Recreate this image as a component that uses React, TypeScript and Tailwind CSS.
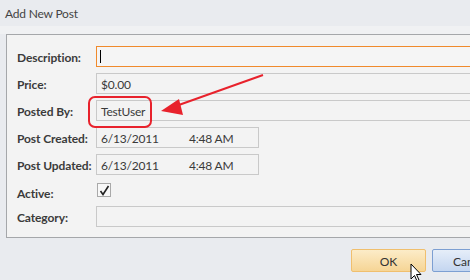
import React from "react";

const font = { fontFamily: 'Lato, "Open Sans", sans-serif' };

function Row({ label, children, h = "h-[21px]" }: { label: string; children: React.ReactNode; h?: string }) {
  return (
    <div className={`flex items-center ${h}`}>
      <div className="w-[79px] shrink-0 whitespace-nowrap text-[12px] tracking-[-0.1px] font-bold text-[#3b3b3b] leading-none pt-[3px]">{label}</div>
      {children}
    </div>
  );
}

const inputText = "text-[12px] tracking-[-0.2px] text-[#3a3a3a] leading-none pt-[3px]";

export default function App() {
  return (
    <div className="relative w-[470px] h-[280px] overflow-hidden bg-[#e9ebef]" style={font}>
      <div className="h-[26px] flex items-center pl-[5px] pt-[2px] text-[12px] tracking-[-0.2px] text-[#444]">Add New Post</div>
      <div className="h-[8px] bg-[#f0f1f3]" />
      <div className="ml-[6px] w-[490px] border border-[#a5a7aa] bg-[#f3f3f3] pt-[11px] pb-[10px] pl-[10px] flex flex-col gap-[6px]">
        <Row label="Description:">
          <div className="flex-1 h-[21px] border border-[#f08a2c] bg-[#f5f5f5] flex items-center pl-[3px]">
            <div className="w-[1px] h-[13px] bg-black" />
          </div>
        </Row>
        <Row label="Price:">
          <div className={`flex-1 h-[21px] border border-[#c9c9c9] flex items-center pl-[4px] ${inputText}`}>$0.00</div>
        </Row>
        <Row label="Posted By:">
          <div className={`flex-1 h-[21px] border border-[#c9c9c9] flex items-center pl-[4px] ${inputText}`}>TestUser</div>
        </Row>
        <Row label="Post Created:">
          <div className={`w-[163px] h-[21px] border border-[#c9c9c9] flex items-center pl-[4px] ${inputText}`}>
            <span className="w-[88px]">6/13/2011</span>
            <span>4:48 AM</span>
          </div>
        </Row>
        <Row label="Post Updated:">
          <div className={`w-[163px] h-[21px] border border-[#c9c9c9] flex items-center pl-[4px] ${inputText}`}>
            <span className="w-[88px]">6/13/2011</span>
            <span>4:48 AM</span>
          </div>
        </Row>
        <div className="flex items-center h-[19px]">
          <div className="w-[79px] shrink-0 text-[12px] tracking-[-0.1px] font-bold text-[#3b3b3b] leading-none mt-[6px]">Active:</div>
          <div className="ml-[1px] w-[14px] h-[14px] border border-[#a9a9a9] bg-[#f8f8f8] flex items-center justify-center self-start mt-[2px]">
            <svg width="11" height="11" viewBox="0 0 11 11">
              <path d="M1.5 6 L4 9.5 L9.5 1" fill="none" stroke="#222" strokeWidth="1.6" />
            </svg>
          </div>
        </div>
        <Row label="Category:">
          <div className="flex-1 h-[21px] border border-[#c9c9c9]" />
        </Row>
      </div>
      <div className="flex pl-[351px] pt-[11px] gap-[6px]">
        <div className="w-[75px] h-[23px] shrink-0 border border-[#f0bf6e] rounded-[2px] bg-gradient-to-b from-[#fcecc8] to-[#f6d595] flex items-center justify-center pt-[2px] text-[12px] text-[#333]">OK</div>
        <div className="w-[75px] h-[23px] shrink-0 border border-[#7d9fd2] rounded-[2px] bg-gradient-to-b from-[#e6eef9] to-[#c4d6f0] flex items-center pl-[20px] pt-[2px] text-[12px] text-[#333] whitespace-nowrap">Cancel</div>
      </div>
      <svg className="absolute left-0 top-0 pointer-events-none" width="470" height="280" viewBox="0 0 470 280">
        <rect x="89" y="97" width="62" height="30" rx="6" ry="6" fill="none" stroke="#e8222c" strokeWidth="2" />
        <line x1="263" y1="75" x2="176" y2="106" stroke="#e8222c" strokeWidth="2" />
        <polygon points="161,111 179,99 183,115" fill="#e8222c" />
        <path d="M411 264 L411 279 L414.5 275.5 L417 281 L419 280 L416.5 274.5 L421 274.5 Z" fill="#fff" stroke="#000" strokeWidth="1" />
      </svg>
    </div>
  );
}
